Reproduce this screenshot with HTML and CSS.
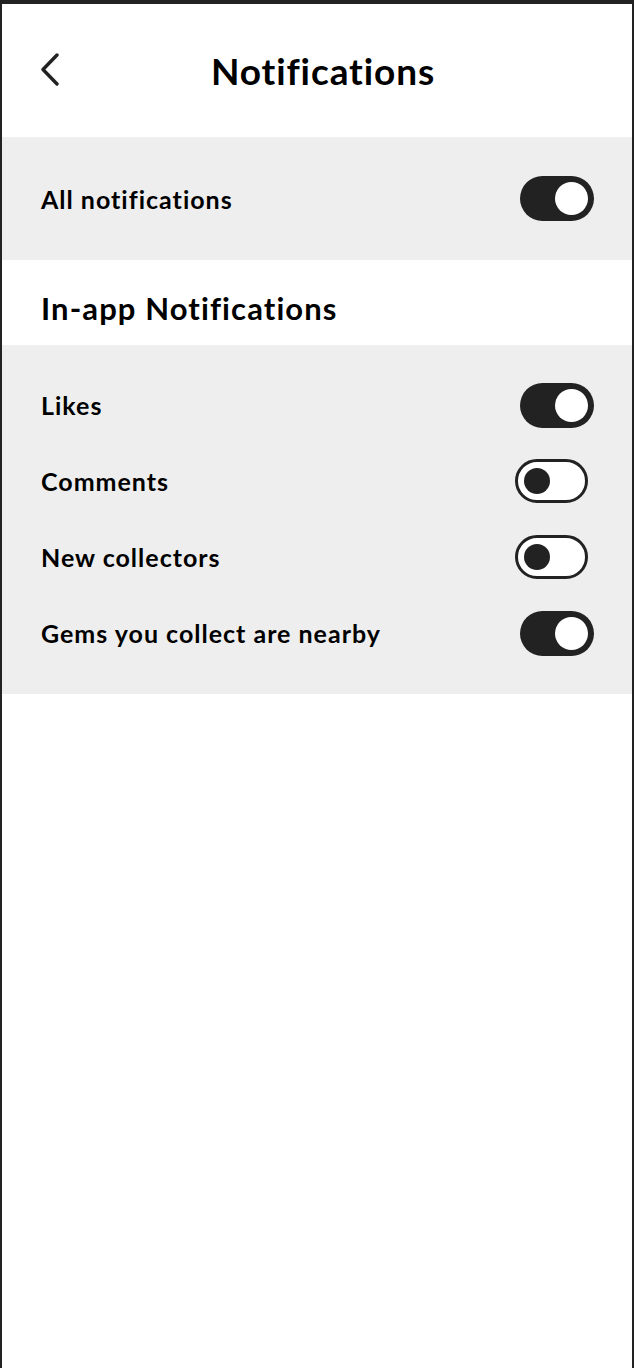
FILE: index.html
```html
<!DOCTYPE html>
<html lang="en">
<head>
<meta charset="utf-8">
<title>Notifications</title>
<link rel="stylesheet" href="styles.css">
</head>
<body>
<div class="frame">
  <header class="header">
    <button class="back" aria-label="Back">
      <svg width="24" height="36" viewBox="0 0 24 36"><path d="M17 2 L3 16.5 L17 31" fill="none" stroke="#222" stroke-width="3.4" stroke-linecap="round" stroke-linejoin="round"/></svg>
    </button>
    <h1 class="title">Notifications</h1>
  </header>
  <section class="group group-main">
    <div class="row">
      <span class="label">All notifications</span>
      <span class="toggle on"><span class="knob"></span></span>
    </div>
  </section>
  <h2 class="section-title">In-app Notifications</h2>
  <section class="group group-list">
    <div class="row">
      <span class="label">Likes</span>
      <span class="toggle on"><span class="knob"></span></span>
    </div>
    <div class="row">
      <span class="label">Comments</span>
      <span class="toggle off"><span class="knob"></span></span>
    </div>
    <div class="row">
      <span class="label">New collectors</span>
      <span class="toggle off"><span class="knob"></span></span>
    </div>
    <div class="row">
      <span class="label">Gems you collect are nearby</span>
      <span class="toggle on"><span class="knob"></span></span>
    </div>
  </section>
</div>
</body>
</html>
```
FILE: styles.css
```css
* { box-sizing: border-box; }
html, body { margin: 0; padding: 0; background: #fff; }
body { font-family: Lato, "Noto Sans", sans-serif; color: #000; }

.frame {
  width: 634px;
  height: 1368px;
  border-top: 4px solid #222;
  border-left: 2px solid #222;
  border-right: 2px solid #222;
  background: #fff;
  overflow: hidden;
}

.header {
  height: 133px;
  display: flex;
  align-items: center;
  justify-content: center;
  position: relative;
}
.back {
  position: absolute;
  left: 38px;
  top: 49px;
  background: none;
  border: 0;
  padding: 0;
  width: 24px;
  height: 36px;
  display: flex;
}
.title {
  margin: 0 0 0 12px;
  font-size: 37px;
  font-weight: 700;
  letter-spacing: 0.9px;
}

.group { background: #eeeeee; }
.group-main { height: 123px; display: flex; align-items: center; }
.group-main .row { width: 100%; }
.group-list { padding: 22px 0 23px; }

.row {
  height: 76px;
  display: flex;
  align-items: center;
  justify-content: space-between;
  padding: 0 38px 0 39px;
}
.label {
  font-size: 25px;
  font-weight: 700;
  letter-spacing: 1px;
}

.section-title {
  margin: 0;
  height: 85px;
  display: flex;
  align-items: center;
  padding: 10px 39px 0;
  font-size: 31px;
  font-weight: 700;
  letter-spacing: 1.1px;
}

.toggle {
  display: flex;
  align-items: center;
  border-radius: 999px;
  flex: none;
}
.toggle.on {
  width: 74px;
  height: 45px;
  background: #222;
  justify-content: flex-end;
  padding-right: 6px;
}
.toggle.on .knob {
  width: 33px;
  height: 33px;
  border-radius: 50%;
  background: #fff;
}
.toggle.off {
  width: 73px;
  height: 44px;
  background: #fff;
  border: 3px solid #222;
  margin-right: 6px;
  padding-left: 6px;
}
.toggle.off .knob {
  width: 26px;
  height: 26px;
  border-radius: 50%;
  background: #222;
}
```
